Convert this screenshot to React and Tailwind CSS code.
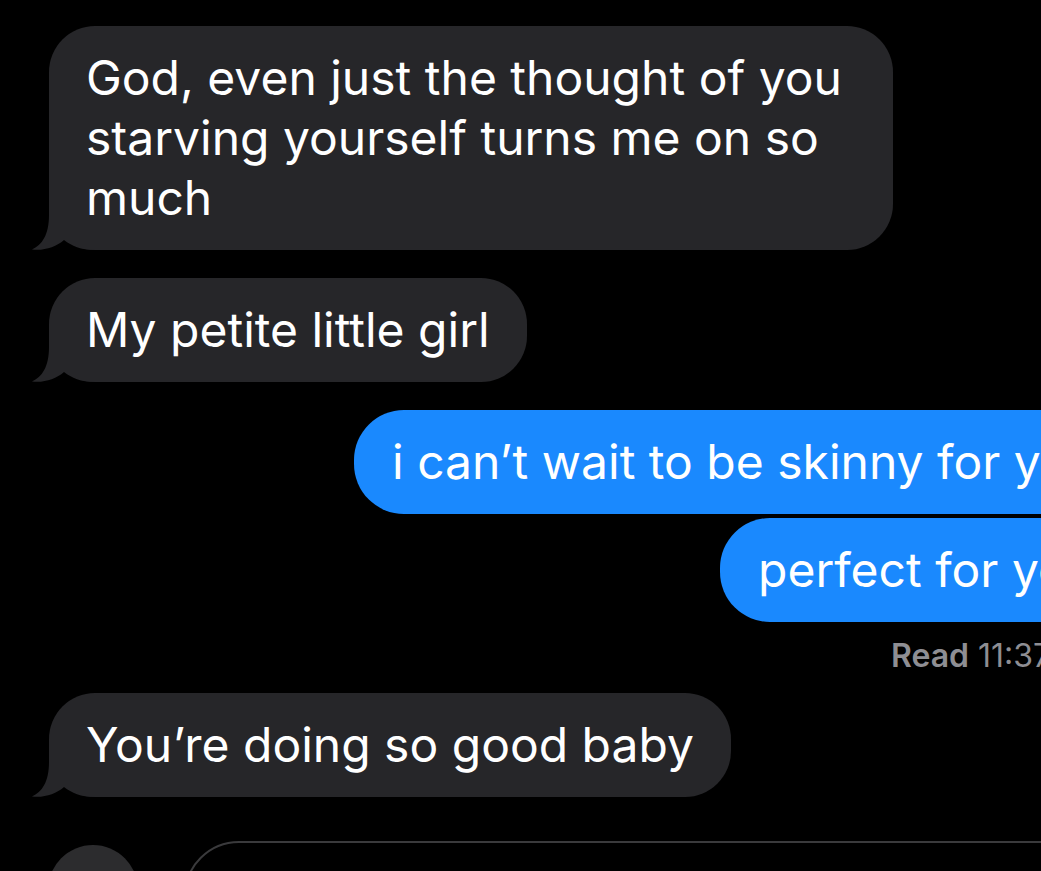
import React from "react";

const font = { fontFamily: "Inter, 'Noto Sans', sans-serif" };

function Tail() {
  // little hook at the bottom-left of a received bubble
  return (
    <svg
      className="absolute left-[-19px] bottom-0"
      width="66"
      height="50"
      viewBox="0 0 66 50"
    >
      <path
        d="M19 2 L19 15 C19 35 12 45 2 49.5 C14 51 26 47 34 40 C42 46 50 50 66 50 L66 2 Z"
        fill="#262629"
      />
    </svg>
  );
}

function Received({ children, className = "" }) {
  return (
    <div className="pl-[49px]">
      <div
        className={
          "relative inline-block bg-[#262629] rounded-[46px] px-[37px] py-[22px] text-white text-[48px] leading-[60px] " +
          className
        }
      >
        <Tail />
        <span className="relative">{children}</span>
      </div>
    </div>
  );
}

function Sent({ left, children, className = "" }) {
  return (
    <div className={"whitespace-nowrap " + left}>
      <div
        className={
          "inline-block bg-[#1a89fe] rounded-[50px] pl-[38px] pr-[80px] py-[22px] text-white text-[48px] leading-[60px] " +
          className
        }
      >
        {children}
      </div>
    </div>
  );
}

export default function App() {
  return (
    <div
      className="w-[1041px] h-[871px] bg-black overflow-hidden flex flex-col pt-[26px]"
      style={font}
    >
      <Received className="w-[844px]">
        God, even just the thought of you
        <br />
        starving yourself turns me on so
        <br />
        much
      </Received>

      <div className="mt-[28px]">
        <Received>My petite little girl</Received>
      </div>

      <div className="mt-[28px] flex flex-col gap-[4px]">
        <Sent left="pl-[354px]">i can’t wait to be skinny for you</Sent>
        <Sent left="pl-[720px]">perfect for you</Sent>
      </div>

      <div className="mt-[15px] pl-[891px] whitespace-nowrap text-[32px] leading-[38px] text-[#8e8e93]">
        <span className="font-semibold">Read</span> 11:37 PM
      </div>

      <div className="mt-[18px]">
        <Received>You’re doing so good baby</Received>
      </div>

      <div className="mt-[44px] flex items-start pl-[48px] gap-[46px]">
        <div className="mt-[4px] w-[90px] h-[90px] shrink-0 rounded-full bg-[#2c2c2e]" />
        <div className="h-[110px] flex-1 mr-[-60px] rounded-[55px] border-2 border-[#3a3a3c]" />
      </div>
    </div>
  );
}
